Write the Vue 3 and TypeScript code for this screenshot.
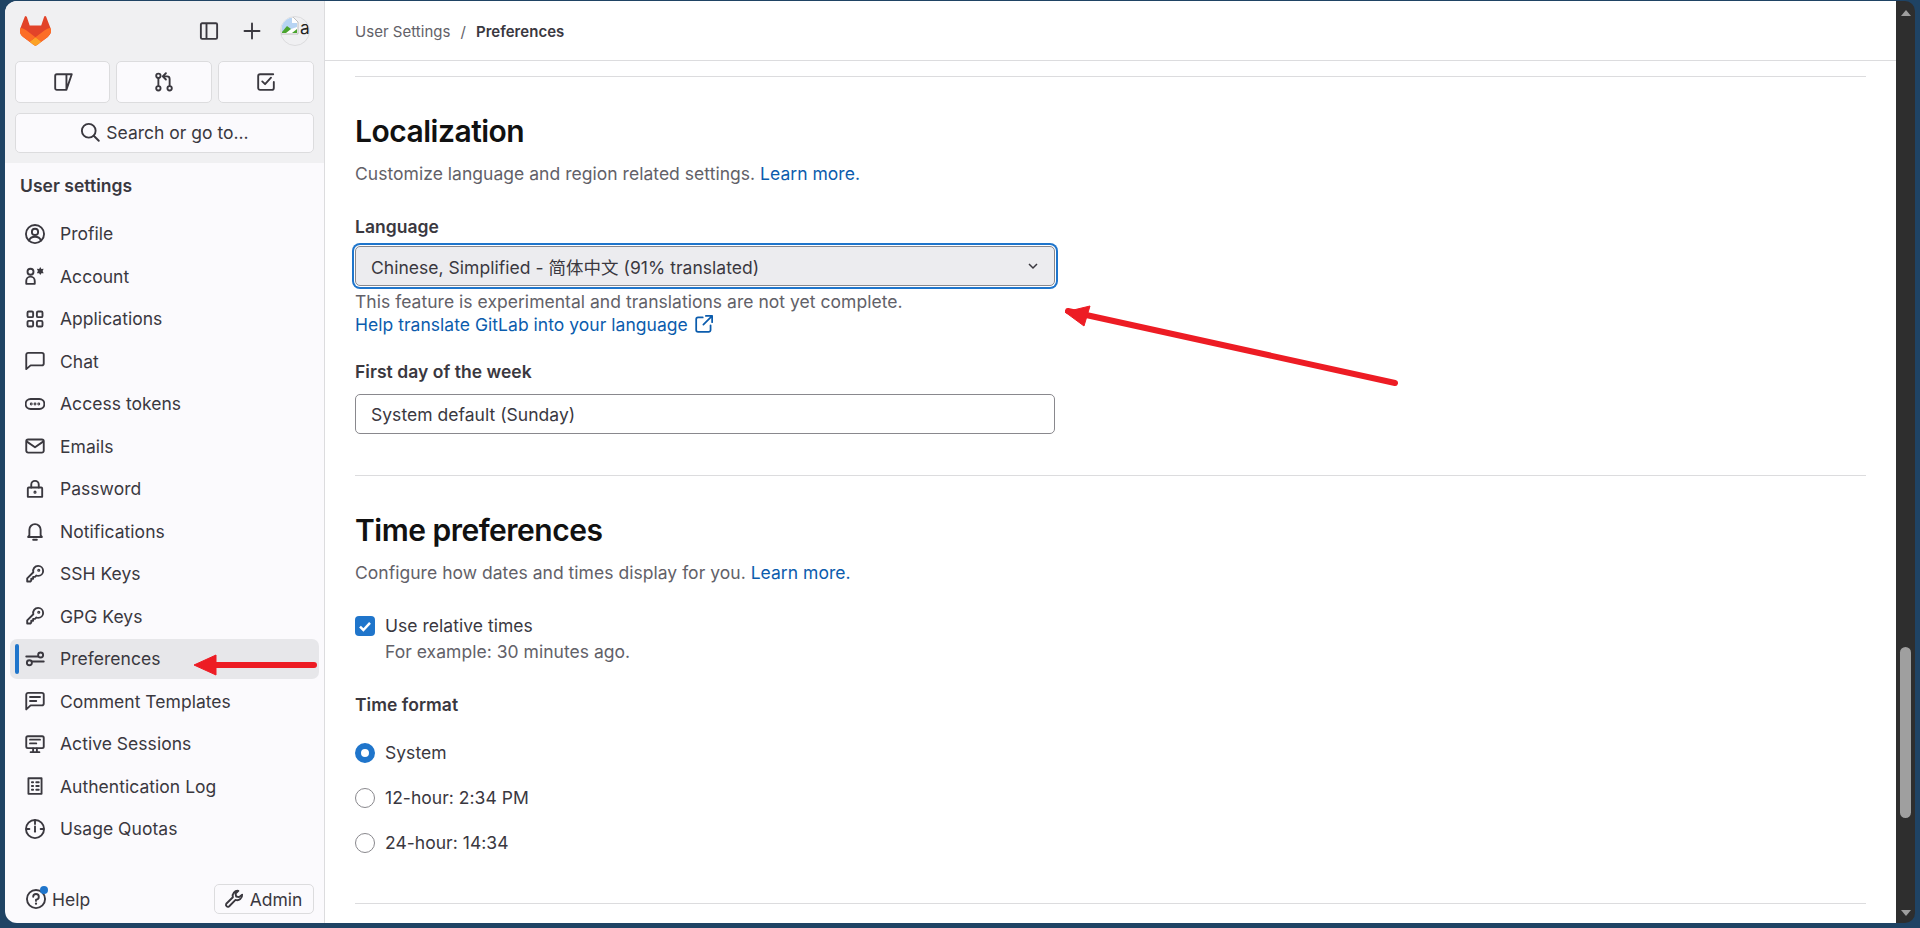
<script setup lang="ts">
interface Shape { d?: string; fill?: boolean; c?: [number, number, number]; }
const icons: Record<string, Shape[]> = {
  profile: [{ c: [8, 8, 7.25] }, { c: [8, 6.3, 2.5] }, { d: 'M3.2 13.3C4 11.2 5.8 10.2 8 10.2s4 1 4.8 3.1' }],
  account: [{ c: [4.4, 4.6, 2.4] }, { d: 'M1 14.250v-2.250C1 10.100 2.500 8.500 4.400 8.500s3.400 1.600 3.400 3.500v2.250z' }, { d: 'M12.200.8l.9 1.500 1.800-.1-.8 1.800.8 1.800-1.800-.1-.9 1.500-.9-1.500-1.800.1.800-1.800-.8-1.800 1.800.1z', fill: true }],
  applications: [{ d: 'M2 3a1 1 0 0 1 1-1h2.5a1 1 0 0 1 1 1v2.5a1 1 0 0 1-1 1H3a1 1 0 0 1-1-1zM9.5 3a1 1 0 0 1 1-1H13a1 1 0 0 1 1 1v2.5a1 1 0 0 1-1 1h-2.5a1 1 0 0 1-1-1zM2 10.500a1 1 0 0 1 1-1h2.5a1 1 0 0 1 1 1V13a1 1 0 0 1-1 1H3a1 1 0 0 1-1-1zM9.5 10.500a1 1 0 0 1 1-1H13a1 1 0 0 1 1 1V13a1 1 0 0 1-1 1h-2.5a1 1 0 0 1-1-1z' }],
  chat: [{ d: 'M1 14.500V3a1.500 1.500 0 0 1 1.500-1.500h11A1.500 1.500 0 0 1 15 3v7a1.500 1.500 0 0 1-1.500 1.500H4.500z' }],
  token: [{ d: 'M4.500 4h7a4 4 0 0 1 0 8h-7a4 4 0 0 1 0-8z' }, { c: [5, 8, 0.4] }, { c: [8, 8, 0.4] }, { c: [11, 8, 0.4] }],
  email: [{ d: 'M2.500 2.750h11A1.500 1.500 0 0 1 15 4.250v7.500a1.500 1.500 0 0 1-1.500 1.500h-11A1.500 1.500 0 0 1 1 11.750v-7.500a1.500 1.500 0 0 1 1.500-1.500z' }, { d: 'M1.500 4.500L8 9l6.500-4.500' }],
  lock: [{ d: 'M3 6.750h10a.75.75 0 0 1 .75.75v6.750H2.250V7.500A.75.75 0 0 1 3 6.750z' }, { d: 'M5 6.750V4.500a3 3 0 0 1 6 0v2.250' }, { c: [8, 10.500, 0.5] }],
  bell: [{ d: 'M3.500 11.500V7a4.500 4.500 0 0 1 9 0v4.500l1 1.250h-11z' }, { d: 'M6.500 15h3' }],
  key: [{ d: 'M10.500 1.500a4 4 0 0 1 0 8c-.5 0-1-.1-1.400-.3L8 10.300H6.500v1.500H5v1.500l-.7.700H1.750v-2.500l4.900-4.900A4 4 0 0 1 10.500 1.500z' }, { c: [11, 5, 0.5] }],
  prefs: [{ d: 'M1 6h9.500M5.500 10H15' }, { c: [12.500, 4.800, 2] }, { c: [3.500, 11, 2] }],
  comment: [{ d: 'M1 14.750V3a1.500 1.500 0 0 1 1.500-1.500h11A1.500 1.500 0 0 1 15 3v7a1.500 1.500 0 0 1-1.500 1.500H4.500z' }, { d: 'M4 4.750h8M4 8h5' }],
  monitor: [{ d: 'M2.250 1.750h11.500a1.250 1.250 0 0 1 1.250 1.250v7a1.250 1.250 0 0 1-1.250 1.250H2.250A1.250 1.250 0 0 1 1 10V3a1.250 1.250 0 0 1 1.250-1.250z' }, { d: 'M4 4.500h8M4 7.500h5M6.500 11.500v2.500M9.500 11.500v2.500M4.500 14.500h7' }],
  log: [{ d: 'M2.750 1.750h10.500v12.500H2.750z' }, { d: 'M5.500 5h1M9 5h2M5.500 8h1M9 8h2M5.500 11h1M9 11h2' }],
  quota: [{ c: [8, 8, 7.25] }, { d: 'M8 1v3M1.500 8h2M12.500 8h2M8 6v3.500' }, { c: [8, 10, 0.9], fill: true }],
};
const nav = [
  ['Profile', 'profile'], ['Account', 'account'], ['Applications', 'applications'], ['Chat', 'chat'],
  ['Access tokens', 'token'], ['Emails', 'email'], ['Password', 'lock'], ['Notifications', 'bell'],
  ['SSH Keys', 'key'], ['GPG Keys', 'key'], ['Preferences', 'prefs'], ['Comment Templates', 'comment'],
  ['Active Sessions', 'monitor'], ['Authentication Log', 'log'], ['Usage Quotas', 'quota'],
].map(([label, icon]) => ({ label, shapes: icons[icon], active: label === 'Preferences' }));
const radios = [
  { label: 'System', on: true },
  { label: '12-hour: 2:34 PM', on: false },
  { label: '24-hour: 14:34', on: false },
];
</script>

<template>
  <div class="frame">
    <aside class="sidebar">
      <div class="top">
        <div class="brand">
          <svg class="logo" viewBox="0 0 25 24">
            <path fill="#E24329" d="m24.507 9.5-.034-.09L21.082.562a.896.896 0 0 0-1.694.091l-2.29 7.01H7.825L5.535.653a.898.898 0 0 0-1.694-.09L.451 9.411.416 9.5a6.297 6.297 0 0 0 2.09 7.278l.012.01.03.022 5.16 3.867 2.56 1.935 1.554 1.176a1.051 1.051 0 0 0 1.268 0l1.555-1.176 2.56-1.935 5.197-3.89.014-.01A6.297 6.297 0 0 0 24.507 9.5Z"/>
            <path fill="#FC6D26" d="m24.507 9.5-.034-.09a11.44 11.44 0 0 0-4.56 2.051l-7.447 5.632 4.742 3.584 5.197-3.89.014-.01A6.297 6.297 0 0 0 24.507 9.5Z"/>
            <path fill="#FCA326" d="m7.707 20.677 2.56 1.935 1.555 1.176a1.051 1.051 0 0 0 1.268 0l1.555-1.176 2.56-1.935-4.743-3.584-4.755 3.584Z"/>
            <path fill="#FC6D26" d="M5.01 11.461a11.43 11.43 0 0 0-4.56-2.05L.416 9.5a6.297 6.297 0 0 0 2.09 7.278l.012.01.03.022 5.16 3.867 4.745-3.584-7.444-5.632Z"/>
          </svg>
          <div class="brand-actions">
            <svg class="icon" viewBox="0 0 16 16"><path class="st" d="M2.500 1.750h11a1 1 0 0 1 1 1v10.500a1 1 0 0 1-1 1h-11a1 1 0 0 1-1-1V2.750a1 1 0 0 1 1-1zM6 1.750v12.500"/></svg>
            <svg class="icon plus" viewBox="0 0 16 16"><path class="st" d="M8 2v12M2 8h12"/></svg>
            <div class="avatar">
              <svg class="broken" viewBox="0 0 19 19">
                <path d="M1 1h12l5 5v12H1z" fill="#fff" stroke="#bdbdbd" stroke-width="1"/>
                <path d="M2 6C2 3.500 4 2 6 2h6v5h5v4L2 16z" fill="#b7d4f3"/>
                <path d="M2 17v-1l5-6 4 3-5 4z" fill="#4aa52e"/>
                <path d="M12 17l5-4v4z" fill="#4aa52e"/>
              </svg>
              <span class="alt">a</span>
            </div>
          </div>
        </div>
        <div class="counters">
          <button class="box">
            <svg class="icon" viewBox="0 0 16 16"><path class="st" d="M3 1.750h12L10.750 14.250H3A1.250 1.250 0 0 1 1.750 13V3A1.250 1.250 0 0 1 3 1.750zM10.750 1.750v12.500"/></svg>
          </button>
          <button class="box">
            <svg class="icon" viewBox="0 0 16 16"><circle class="st" cx="3.500" cy="3" r="1.750"/><circle class="st" cx="3.500" cy="13" r="1.750"/><circle class="st" cx="12.500" cy="13" r="1.750"/><path class="st" d="M3.500 4.750v6.500M12.500 11.250V5.500A2 2 0 0 0 10.500 3.500H7.500M9.500 1L7 3.500 9.500 6"/></svg>
          </button>
          <button class="box">
            <svg class="icon" viewBox="0 0 16 16"><path class="st" d="M14.250 8v4.750a1.500 1.500 0 0 1-1.500 1.500h-9.500a1.500 1.500 0 0 1-1.500-1.500v-9.500a1.500 1.500 0 0 1 1.500-1.500h10.500M5 7.500l2.250 2.250L12 4.500"/></svg>
          </button>
        </div>
        <button class="box search">
          <svg class="icon" viewBox="0 0 16 16"><circle class="st" cx="7" cy="7" r="5.500"/><path class="st" d="M11 11l4 4"/></svg>
          <span>Search or go to...</span>
        </button>
      </div>
      <div class="menu">
        <div class="menu-title">User settings</div>
        <nav class="nav">
          <a v-for="item in nav" :key="item.label" class="nav-item" :class="{ active: item.active }">
            <svg class="icon" viewBox="0 0 16 16">
              <template v-for="(s, i) in item.shapes" :key="i">
                <circle v-if="s.c" :class="s.fill ? 'fl' : 'st'" :cx="s.c[0]" :cy="s.c[1]" :r="s.c[2]" />
                <path v-else :class="s.fill ? 'fl' : 'st'" :d="s.d" />
              </template>
            </svg>
            <span>{{ item.label }}</span>
          </a>
        </nav>
      </div>
      <div class="foot">
        <div class="help">
          <span class="help-icon">
            <svg class="icon" viewBox="0 0 16 16"><circle class="st" cx="8" cy="8" r="7.250"/><path class="st" d="M5.750 6.250A2.250 2.250 0 1 1 8 8.500v1"/><circle class="fl" cx="8" cy="11.750" r="0.900"/></svg>
            <i class="dot"></i>
          </span>
          <span>Help</span>
        </div>
        <button class="box admin">
          <svg class="icon" viewBox="0 0 16 16"><path class="st" d="M14.500 4.500a4 4 0 0 1-5.300 4.200L4 14a1.600 1.600 0 0 1-2.200-2.200l5.300-5.200A4 4 0 0 1 11.500 1.500L9.250 3.750l.5 2.250 2.250.5z"/></svg>
          <span>Admin</span>
        </button>
      </div>
    </aside>

    <main class="main">
      <header class="crumbs">
        <span class="crumb">User Settings</span>
        <span class="slash">/</span>
        <strong>Preferences</strong>
      </header>
      <div class="content">
        <section class="section first">
          <h2>Localization</h2>
          <p class="lead">Customize language and region related settings. <a>Learn more.</a></p>
          <label class="label">Language</label>
          <div class="select focused">
            <span>Chinese, Simplified - 简体中文 (91% translated)</span>
            <svg class="chev" viewBox="0 0 16 16"><path d="M4 6l4 4 4-4" /></svg>
          </div>
          <div class="hint">This feature is experimental and translations are not yet complete.</div>
          <a class="ext">Help translate GitLab into your language
            <svg class="ext-icon" viewBox="0 0 16 16"><path d="M7 2.750H3.250a1.500 1.500 0 0 0-1.500 1.500v8.500a1.500 1.500 0 0 0 1.500 1.500h8.500a1.500 1.500 0 0 0 1.500-1.500V9M9.500 1.500h5v5M14.500 1.500L7.500 8.500"/></svg>
          </a>
          <label class="label day">First day of the week</label>
          <div class="select plain">System default (Sunday)</div>
        </section>
        <section class="section">
          <h2>Time preferences</h2>
          <p class="lead">Configure how dates and times display for you. <a>Learn more.</a></p>
          <div class="check">
            <span class="checkbox"><svg viewBox="0 0 16 16"><path d="M4 8.500l2.700 2.700L12 5.500"/></svg></span>
            <div>
              <div class="check-label">Use relative times</div>
              <div class="check-hint">For example: 30 minutes ago.</div>
            </div>
          </div>
          <div class="label format">Time format</div>
          <div class="radios">
            <div v-for="r in radios" :key="r.label" class="radio-row">
              <span class="radio" :class="{ on: r.on }"></span>
              <span>{{ r.label }}</span>
            </div>
          </div>
        </section>
        <hr class="end" />
      </div>
    </main>

    <div class="scrollbar">
      <span class="arrow up"></span>
      <span class="track"><span class="thumb"></span></span>
      <span class="arrow down"></span>
    </div>

    <svg class="annot" viewBox="0 0 1920 928">
      <path d="M1395 383L1068 311" stroke="#ed1c24" stroke-width="6" stroke-linecap="round" fill="none"/>
      <path d="M1065 312L1090 306L1084 326Z" fill="#ed1c24" stroke="#ed1c24" stroke-width="1"/>
      <path d="M314 665H215" stroke="#ed1c24" stroke-width="6" stroke-linecap="round" fill="none"/>
      <path d="M194 665L216 655V675Z" fill="#ed1c24" stroke="#ed1c24" stroke-width="1"/>
    </svg>
  </div>
</template>

<style>
html, body { margin: 0; height: 100%; overflow: hidden; }
</style>

<style scoped>
.frame {
  position: relative;
  display: flex;
  height: 928px;
  box-sizing: border-box;
  padding: 1px 5px 5px 5px;
  background: #1f4364;
  font-family: Inter, "Noto Sans CJK SC", "Liberation Sans", sans-serif;
  font-size: 17.5px;
  letter-spacing: 0.03px;
  color: #3a383f;
  overflow: hidden;
}
.icon { width: 20px; height: 20px; flex: none; display: block; }
.st { fill: none; stroke: #3a383f; stroke-width: 1.5; stroke-linecap: round; stroke-linejoin: round; }
.fl { fill: #3a383f; stroke: none; }
.sidebar {
  width: 320px;
  flex: none;
  display: flex;
  flex-direction: column;
  box-sizing: border-box;
  background: #fbfafd;
  border-right: 1px solid #dcdcde;
  border-radius: 12px 0 0 12px;
  overflow: hidden;
}
.top { background: #f0f0f2; padding: 15px 10px 10px; height: 162px; box-sizing: border-box; }
.brand { display: flex; justify-content: space-between; align-items: center; height: 30px; padding-left: 5px; }
.logo { width: 31px; height: 30px; }
.brand-actions { display: flex; align-items: center; }
.brand-actions .plus { margin-left: 23px; }
.avatar { position: relative; width: 30px; height: 30px; margin: 0 4px 0 18px; border-radius: 50%; border: 1px solid #dcdcde; box-sizing: border-box; overflow: hidden; }
.broken { position: absolute; left: -1px; top: -1px; width: 19px; height: 19px; }
.alt { position: absolute; left: 19px; top: 0; font-size: 17.5px; line-height: 22px; color: #222; }
.counters { display: grid; grid-template-columns: 95px 96px 96px; gap: 6px; margin-top: 15px; }
.box {
  display: flex;
  align-items: center;
  justify-content: center;
  background: #fbfafd;
  border: 1px solid #dcdcde;
  border-radius: 5px;
  box-sizing: border-box;
  font: inherit;
  color: inherit;
  padding: 0;
}
.counters .box { height: 42px; }
.search { width: 100%; height: 40px; margin-top: 10px; gap: 6px; padding-bottom: 2px; }
.menu { flex: 1; padding: 0 5px; }
.menu-title { font-weight: 600; padding: 0 10px; margin: 13px 0 17.5px; line-height: 20px; }
.nav { display: flex; flex-direction: column; gap: 2.5px; }
.nav-item {
  position: relative;
  display: flex;
  align-items: center;
  gap: 15px;
  height: 40px;
  padding-left: 15px;
  border-radius: 7px;
}
.nav-item.active { background: #e7e7ea; }
.nav-item.active::before {
  content: "";
  position: absolute;
  left: 5px;
  top: 5px;
  bottom: 5px;
  width: 4px;
  border-radius: 2px;
  background: #1f75cb;
}
.foot { display: flex; align-items: center; justify-content: space-between; padding: 0 10px 9px 21px; }
.help { display: flex; align-items: center; gap: 6px; }
.help-icon { position: relative; }
.dot { position: absolute; right: -2px; top: -3px; width: 8px; height: 8px; border-radius: 50%; background: #1f75cb; }
.admin { width: 100px; height: 30px; gap: 6px; padding-right: 2px; }
.main { flex: 1; min-width: 0; background: #fff; display: flex; flex-direction: column; }
.crumbs {
  height: 60px;
  flex: none;
  box-sizing: border-box;
  display: flex;
  align-items: center;
  gap: 10px;
  padding: 2px 30px 0;
  border-bottom: 1px solid #dcdcde;
  font-size: 15px;
}
.crumb, .slash { color: #626168; }
.crumbs strong { font-weight: 600; color: #3a383f; }
.content { padding: 15px 30px 0; }
.section { border-top: 1px solid #dcdcde; padding-top: 35px; height: 399px; box-sizing: border-box; }
.section + .section { height: 428px; }
h2 { margin: 0; font-size: 30px; line-height: 38px; font-weight: 600; letter-spacing: -0.5px; color: #111; }
.lead { margin: 11px 0 0; line-height: 26px; color: #626168; }
.lead a, .ext { color: #0b5cad; }
.label { display: block; font-weight: 600; line-height: 22px; margin-top: 29px; }
.select {
  width: 700px;
  height: 40px;
  box-sizing: border-box;
  margin-top: 8px;
  padding: 0 13px 0 15px;
  display: flex;
  align-items: center;
  justify-content: space-between;
  border: 1px solid #89888d;
  border-radius: 5px;
}
.focused { background: #ececef; box-shadow: 0 0 0 1px #fff, 0 0 0 3px #1f75cb; }
.plain { margin-top: 11.5px; }
.chev { width: 16px; height: 16px; fill: none; stroke: #3a383f; stroke-width: 1.5; }
.hint { color: #626168; line-height: 23px; margin-top: 3.5px; }
.ext { display: flex; align-items: center; gap: 6px; line-height: 23px; }
.ext-icon { width: 20px; height: 20px; fill: none; stroke: #0b5cad; stroke-width: 1.4; stroke-linecap: round; stroke-linejoin: round; }
.day { margin-top: 25px; }
.check { display: flex; gap: 10px; margin-top: 30px; }
.checkbox { width: 20px; height: 20px; border-radius: 4px; background: #1f75cb; flex: none; }
.checkbox svg { display: block; fill: none; stroke: #fff; stroke-width: 2; }
.check-label { line-height: 20px; }
.check-hint { color: #626168; line-height: 26px; margin-top: 3px; }
.format { margin-top: 29px; }
.radios { display: flex; flex-direction: column; gap: 25px; margin-top: 26.5px; }
.radio-row { display: flex; align-items: center; gap: 10px; height: 20px; }
.radio { width: 20px; height: 20px; box-sizing: border-box; border-radius: 50%; border: 1px solid #89888d; background: #fff; }
.radio.on { border: 6px solid #1f75cb; }
.end { margin: 0; border: 0; border-top: 1px solid #dcdcde; }
.scrollbar { width: 19px; flex: none; background: #2e2e2e; border-radius: 0 10px 10px 0; display: flex; flex-direction: column; align-items: center; padding: 9px 0 7px; box-sizing: border-box; }
.track { flex: 1; width: 11px; padding-top: 631px; box-sizing: border-box; }
.thumb { display: block; width: 11px; height: 171px; border-radius: 6px; background: #9f9f9f; }
.arrow { width: 0; height: 0; border-left: 5px solid transparent; border-right: 5px solid transparent; }
.arrow.up { border-bottom: 6px solid #9f9f9f; }
.arrow.down { border-top: 6px solid #9f9f9f; }
.annot { position: absolute; inset: 0; width: 1920px; height: 928px; pointer-events: none; }
</style>
